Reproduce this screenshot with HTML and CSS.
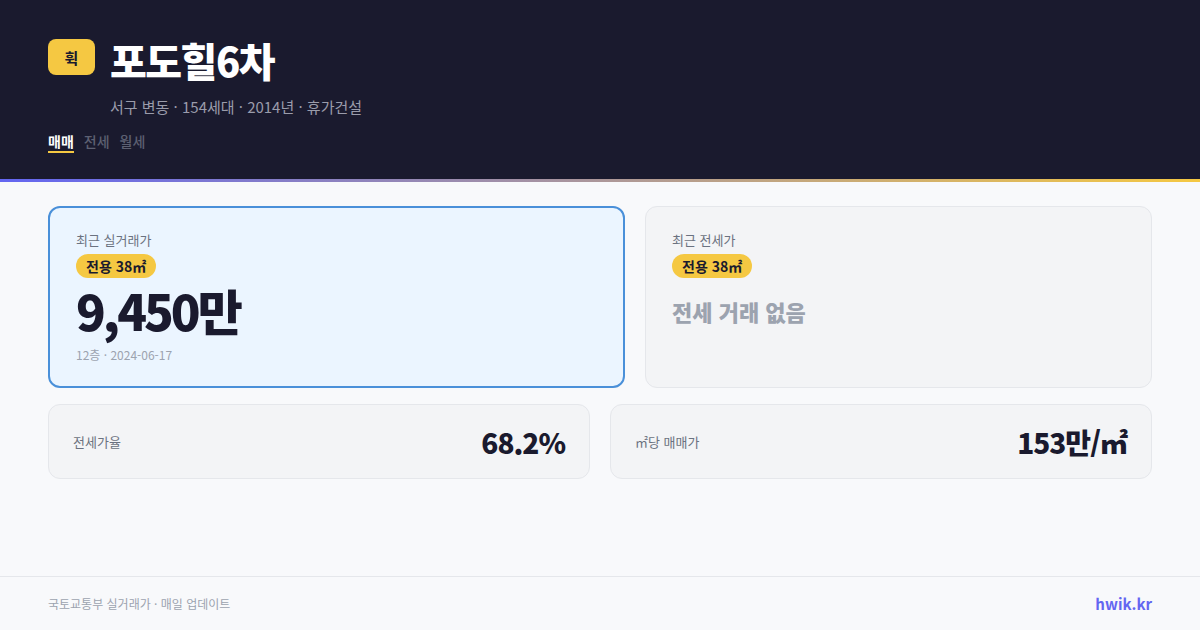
FILE: index.html
```html
<!DOCTYPE html>
<html lang="ko">
<head>
<meta charset="utf-8">
<title>포도힐6차</title>
<link rel="stylesheet" href="styles.css">
</head>
<body>
<div class="page">
  <header class="header">
    <div class="title-row">
      <div class="logo">휙</div>
      <div class="title-col">
        <h1 class="title">포도힐6차</h1>
        <div class="subtitle">서구 변동 · 154세대 · 2014년 · 휴가건설</div>
      </div>
    </div>
    <nav class="tabs">
      <span class="tab active">매매</span>
      <span class="tab">전세</span>
      <span class="tab">월세</span>
    </nav>
  </header>
  <div class="accent"></div>
  <main class="main">
    <div class="top-row">
      <section class="card card-primary">
        <div class="card-label">최근 실거래가</div>
        <span class="pill">전용 38㎡</span>
        <div class="price">9,450만</div>
        <div class="meta">12층 · 2024-06-17</div>
      </section>
      <section class="card card-muted">
        <div class="card-label">최근 전세가</div>
        <span class="pill">전용 38㎡</span>
        <div class="empty">전세 거래 없음</div>
      </section>
    </div>
    <div class="bottom-row">
      <section class="stat">
        <span class="stat-label">전세가율</span>
        <span class="stat-value">68.2%</span>
      </section>
      <section class="stat">
        <span class="stat-label">㎡당 매매가</span>
        <span class="stat-value">153만/㎡</span>
      </section>
    </div>
  </main>
  <footer class="footer">
    <span class="source">국토교통부 실거래가 · 매일 업데이트</span>
    <span class="brand">hwik.kr</span>
  </footer>
</div>
</body>
</html>
```

FILE: styles.css
```css
* { box-sizing: border-box; }
html, body { margin: 0; padding: 0; }
body {
  width: 1200px;
  height: 630px;
  overflow: hidden;
  background: #f8f9fb;
  font-family: "Noto Sans CJK KR", "Noto Sans", sans-serif;
  color: #1a1a2e;
}
.page {
  display: flex;
  flex-direction: column;
  height: 630px;
}
.header {
  height: 179px;
  background: #1a1a2e;
  padding: 36px 48px 0;
}
.title-row {
  display: flex;
  align-items: flex-start;
  gap: 15px;
}
.logo {
  width: 47px;
  height: 36px;
  margin-top: 3px;
  border-radius: 8px;
  background: #f5c842;
  color: #1a1a2e;
  font-weight: 700;
  font-size: 15px;
  display: flex;
  align-items: center;
  justify-content: center;
}
.title {
  margin: 0;
  font-size: 40px;
  line-height: 48px;
  font-weight: 800;
  color: #ffffff;
  letter-spacing: -1.5px;
}
.subtitle {
  margin-top: 13px;
  font-size: 15px;
  line-height: 20px;
  color: #9a9cab;
}
.tabs {
  display: flex;
  gap: 10px;
  margin-top: 14px;
}
.tab {
  font-size: 14px;
  line-height: 20px;
  color: #5d6072;
  font-weight: 500;
  border-bottom: 2px solid transparent;
}
.tab.active {
  color: #ffffff;
  font-weight: 700;
  border-bottom-color: #f5c842;
}
.accent {
  height: 3px;
  background: linear-gradient(90deg, #6366f1, #f5c842);
}
.main {
  flex: 1;
  padding: 24px 48px 0;
  display: flex;
  flex-direction: column;
  gap: 19px;
}
.top-row {
  display: grid;
  grid-template-columns: 577fr 507fr;
  gap: 20px;
  height: 179px;
}
.card {
  border-radius: 12px;
  padding: 22px 26px;
  display: flex;
  flex-direction: column;
  align-items: flex-start;
}
.card-primary {
  background: #ebf5ff;
  border: 2px solid #4a90d9;
}
.card-muted {
  background: #f3f4f6;
  border: 1px solid #e5e7eb;
  padding: 23px 26px;
}
.card-label {
  font-size: 13px;
  line-height: 20px;
  color: #6b7280;
}
.pill {
  margin-top: 4px;
  height: 24px;
  padding: 0 10px;
  border-radius: 12px;
  background: #f5c842;
  color: #1a1a2e;
  font-size: 14px;
  font-weight: 700;
  line-height: 24px;
}
.price {
  margin-top: 6px;
  font-size: 49px;
  line-height: 52px;
  font-weight: 800;
  letter-spacing: -3px;
  color: #1a1a2e;
}
.meta {
  margin-top: 10px;
  font-size: 12px;
  line-height: 18px;
  color: #9ca3af;
}
.empty {
  margin-top: 18px;
  font-size: 22px;
  line-height: 30px;
  font-weight: 800;
  color: #9ca3af;
}
.bottom-row {
  display: grid;
  grid-template-columns: 1fr 1fr;
  gap: 20px;
}
.stat {
  height: 75px;
  border-radius: 12px;
  background: #f3f4f6;
  border: 1px solid #e5e7eb;
  padding: 0 24px;
  display: flex;
  align-items: center;
  justify-content: space-between;
}
.stat-label {
  font-size: 13px;
  color: #6b7280;
}
.stat-value {
  font-size: 28px;
  font-weight: 800;
  color: #1a1a2e;
  letter-spacing: -1px;
}
.footer {
  height: 54px;
  border-top: 1px solid #e5e7eb;
  padding: 0 48px;
  display: flex;
  align-items: center;
  justify-content: space-between;
}
.source {
  font-size: 12px;
  color: #9ca3af;
}
.brand {
  font-size: 15px;
  font-weight: 700;
  color: #6366f1;
}
```
